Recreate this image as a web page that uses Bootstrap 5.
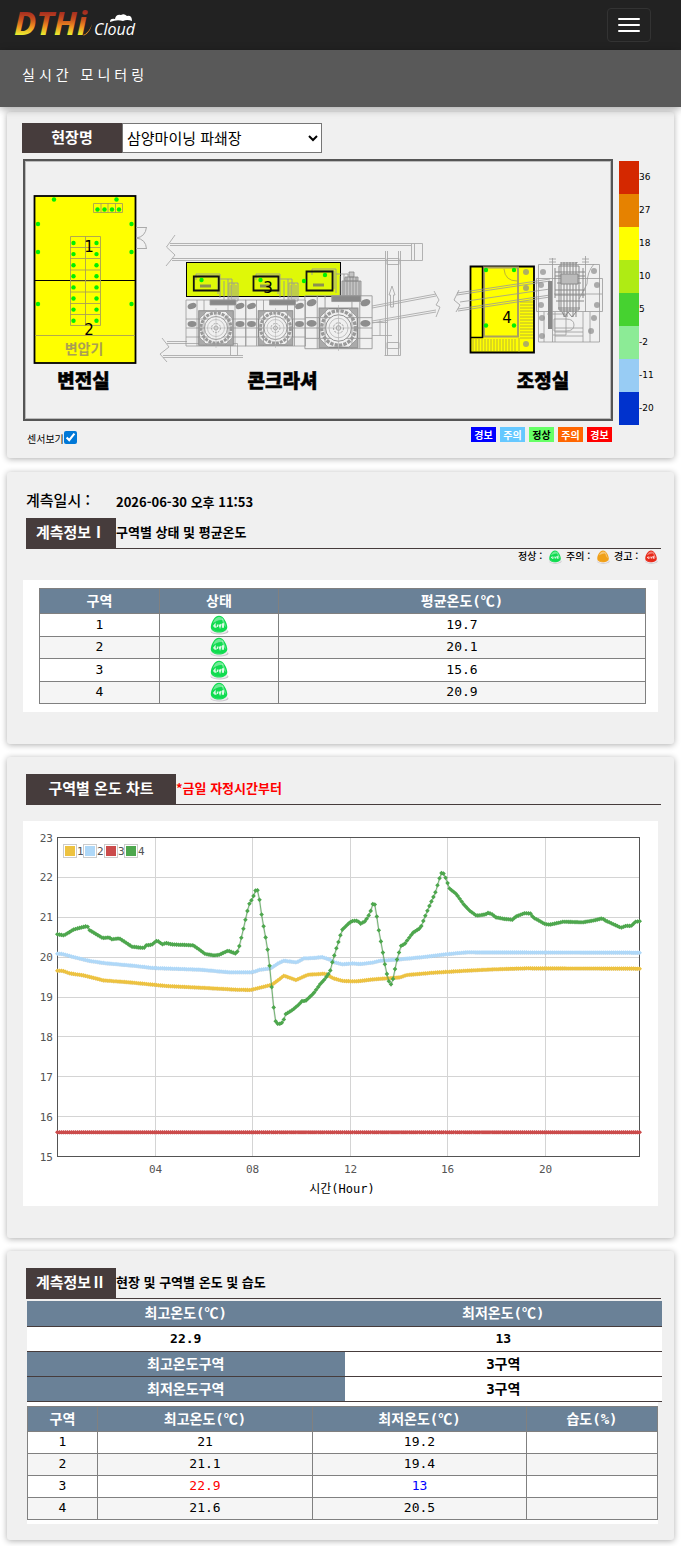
<!DOCTYPE html>
<html lang="ko">
<head>
<meta charset="utf-8">
<meta name="viewport" content="width=device-width, initial-scale=1">
<title>DTHi Cloud</title>
<link rel="stylesheet" href="https://cdn.jsdelivr.net/npm/bootstrap@5.3.0/dist/css/bootstrap.min.css">
<style>
  :root { --ink: #463c3c; --head: #6a8197; --panel: #f0f0f0; --mono: "DejaVu Sans Mono", "Noto Sans CJK KR", monospace; }
  body { background: #fff; color: #000; font: 14px/20px "Noto Sans CJK KR", "Noto Sans", sans-serif; }
  .topbar { background: #222; height: 50px; padding: 0 30px 0 14px; }
  .brand-svg { display: block; width: 126px; height: 48px; }
  .menu-btn { width: 44px; height: 34px; padding: 0; border: 1px solid #333; border-radius: 4px; background: transparent; }
  .menu-btn span { width: 22px; height: 2px; border-radius: 1px; background: #fff; }
  .page-title { position: relative; z-index: 1; height: 57px; padding: 14px 22px 0; background: #595959; box-shadow: 0 2px 8px rgba(0,0,0,.35); }
  .page-title h1 { margin: 0; font-size: 14px; line-height: 20px; letter-spacing: 4px; color: #fff; font-weight: 400; }
  .panel { background: var(--panel); border: 0; border-radius: 3px; margin: 0 7px 13px; padding: 17px 16px 32px; box-shadow: 0 1px 6px rgba(0,0,0,.32); }
  .panel-map { margin-top: 5px; margin-bottom: 14px; padding: 11px 16px 14px; }
  .panel-last { margin-bottom: 6px; padding-bottom: 16px; }
  .site-row { margin: 0 0 6px -1px; }
  .site-name { width: 100px; height: 30px; line-height: 28px; background: var(--ink); color: #fff; font-size: 15px; font-weight: 700; text-align: center; }
  .site-select { width: 200px; height: 30px; border: 1px solid #767676; border-radius: 0; background: #fff; color: #000; font-size: 15px; padding: 0 0 2px; }
  .site-map { display: block; width: 100%; height: auto; }
  .map-col { flex: 1 1 0; min-width: 0; }
  .scale { width: 39px; margin-left: 6px; padding-top: 2px; }
  .scale li { height: 33px; font: 9px/33px "DejaVu Sans", sans-serif; }
  .scale i { width: 20px; height: 33px; }
  .map-foot { margin-right: 46px; padding: 2px 0 0 4px; font-size: 10px; height: 19px; }
  .map-foot input { width: 13px; height: 13px; margin: 0; accent-color: #0078d7; }
  .map-foot label { line-height: 10px; }
  .tag { width: 25px; height: 15px; line-height: 15px; text-align: center; font-weight: 700; color: #fff; }
  .tag-low2 { background: #00f; } .tag-low1 { background: #66c8ff; } .tag-ok { background: #6f6; color: #000; } .tag-high1 { background: #f60; } .tag-high2 { background: #f00; }
  .stamp { height: 29px; padding: 1px 0 0 3px; font-weight: 700; }
  .stamp span { width: 90px; font-size: 15px; font-weight: 500; }
  .stamp time { font-size: 13px; line-height: 24px; }
  .title-bar { height: 31px; margin: 0 -3px 0 3px; border-bottom: 1px solid var(--ink); }
  .title-bar h2 { width: 90px; height: 31px; margin: 0; line-height: 28px; background: var(--ink); color: #fff; font-size: 15px; font-weight: 700; text-align: center; white-space: nowrap; }
  .title-bar h2.wide { width: 150px; }
  .title-bar p { margin: 0; font-size: 13px; line-height: 28px; font-weight: 700; }
  .states { height: 31px; font-size: 10px; line-height: 14px; gap: 4px; font-weight: 500; }
  .states svg { width: 14px; height: 14px; margin-left: 3px; }
  .sheet { background: #fff; }
  .sheet-pad { padding: 8px 12px 8px 16px; }
  .sheet-low { margin: 2px 0 0 4px; padding-bottom: 4px; }
  .grid { width: 100%; table-layout: fixed; border-collapse: collapse; font: 13px/18px var(--mono); text-align: center; }
  .grid th, .grid td { border: 1px solid #808080; padding: 0; height: 22px; }
  .grid thead th { height: 25px; background: var(--head); color: #fff; font-size: 14px; }
  .grid tbody tr:nth-child(even) { background: #f5f5f5; }
  .grid svg { display: block; width: 20px; height: 20px; margin: 0 auto; }
  .states-grid { height: 116px; }
  .extremes { width: calc(100% + 4px); table-layout: fixed; border-collapse: collapse; font: 700 13px/18px var(--mono); text-align: center; background: #fff; margin-bottom: 4px; }
  .extremes th, .extremes td { height: 25px; padding: 0; border-bottom: 1px solid var(--ink); }
  .extremes th { background: var(--head); color: #fff; font-size: 14px; }
  .extremes .zone { font-size: 14px; }
  .hot { color: #f00; } .cold { color: #00f; }
  .egg-ok { color: #10dc50; } .egg-warn { color: #f0a018; } .egg-alarm { color: #e82818; }
  .chart-svg { display: block; width: 100%; height: auto; }
</style>
</head>
<body>
<svg width="0" height="0" class="position-absolute" aria-hidden="true">
  <defs>
    <symbol id="egg" viewBox="0 0 20 20">
      <ellipse cx="10.5" cy="16.5" rx="9" ry="3" fill="#c9c5cb"/>
      <ellipse cx="10" cy="15.6" rx="8.6" ry="3" fill="#eeeaef"/>
      <path d="M10 .8C14.5.8 18 7.500 18.300 12c.1 3.500-4 5.500-8.300 5.500S1.600 15.500 1.800 12C2 7.500 5.500.8 10 .8z" fill="currentColor"/>
      <path d="M4 8C5.500 3.500 8 2 10.500 2c2 0 3.500 1.500 4.500 3.500C11 4 7 6 4 8z" fill="#fff" opacity=".4"/>
      <path d="M13 3c2 2 3.500 6 4 9-2-1-4-5-4-9zM3 14c4 3.500 10 3.500 14 .5-3 3-11 3.500-14-.5z" fill="#fff" opacity=".35"/>
    </symbol>
    <symbol id="mark-live" viewBox="0 0 20 20"><path d="M4.500 11.500l1.500-2v2.500h1.500M8.500 12V9.500M10 9.500l1 2.500 1-3M15 9h-1.500v3H15M13.500 10.500H15" fill="none" stroke="#fff" stroke-width="1.300" opacity=".85"/></symbol>
  </defs>
</svg>

<header>
  <nav class="navbar topbar flex-nowrap justify-content-between" aria-label="주 메뉴">
    <a href="#" aria-label="DTHi Cloud">
      <svg class="brand-svg" viewBox="0 0 126 48">
        <defs><linearGradient id="fire" gradientUnits="userSpaceOnUse" x1="0" y1="10" x2="0" y2="34"><stop offset="0" stop-color="#a02820"/><stop offset=".35" stop-color="#c8501e"/><stop offset=".65" stop-color="#f09020"/><stop offset="1" stop-color="#e8f030"/></linearGradient></defs>
        <text x="0" y="34" font-family="Open Sans" font-style="italic" font-weight="700" font-size="33" fill="url(#fire)">DTHi</text>
        <path d="M69 34q6-2 9-11-2 9-8 11.500z" fill="#f09020"/>
        <text x="80" y="34" font-family="Open Sans" font-style="italic" font-size="16" fill="#fff">Cloud</text>
        <path d="M96 21q0-4 5-3 1-5 6-4 3-2 6 1 5-1 5 5-5-2-9 0-6-2-13 1z" fill="#fff"/>
      </svg>
    </a>
    <button type="button" class="menu-btn d-flex flex-column align-items-center justify-content-center gap-1" aria-label="메뉴 열기"><span></span><span></span><span></span></button>
  </nav>
  <div class="page-title"><h1>실시간 모니터링</h1></div>
</header>

<main>
<section class="card panel panel-map">
  <div class="site-row d-flex">
    <label class="site-name" for="site">현장명</label>
    <select class="site-select" id="site"><option>삼양마이닝 파쇄장</option></select>
  </div>
  <div class="d-flex align-items-start">
    <div class="map-col">
      <svg class="site-map" viewBox="23 159 590 262" role="img" aria-label="현장 평면도">
        <defs>
          <g id="crusher" fill="none" stroke="#999" stroke-width=".8">
            <path d="M-30-28h60v46h-60zM-30-9h60M-30 9h60M-30 0h60M-19-28v46M19-28v46M-12-28v46M12-28v46"/>
            <rect x="-17" y="-17" width="34" height="34" stroke="#888" stroke-width="1.500"/>
            <path d="M-17-9v-8h8zM17-9v-8H9zM-17 9v8h8zM17 9v8H9z" fill="#aaa"/>
            <circle r="15" stroke="#999" stroke-width="3" stroke-dasharray="3 1"/>
            <circle r="11.500" fill="#f0f0f0" stroke="#888"/><circle r="8.500" stroke="#bbb"/><circle r="4.500" stroke-dasharray="2 1"/><circle r="2"/>
            <path d="M-20 0h40M0-20V20" stroke="#aaa" stroke-width=".5"/>
            <g fill="#8d8d8d" stroke="none"><ellipse cx="-24" cy="-22" rx="4.500" ry="3" transform="rotate(-18 -24 -22)"/><ellipse cx="24" cy="-22" rx="4.500" ry="3" transform="rotate(-18 24 -22)"/><ellipse cx="-24" cy="-4" rx="4.500" ry="3"/><ellipse cx="24" cy="-4" rx="4.500" ry="3"/></g>
            <path d="M-6-28h26v5H-6z" fill="#888"/>
          </g>
          <g id="motor" fill="none" stroke="#999" stroke-width=".9">
            <path d="M0 7V1h24v24M2 3h20v18M24 6h12v22M28 8v22M32 6v24M33 10h9v18h-9zM35 12v14M38 10v18M40 12v14"/>
          </g>
        </defs>
        <rect x="24" y="160" width="588" height="260" fill="#f0f0f0" stroke="#555" stroke-width="2"/>
        <rect x="25.500" y="161.500" width="585" height="257" fill="none" stroke="#bbb"/>

        <!-- 변전실 -->
        <rect x="34.500" y="196" width="101" height="167" fill="#ff0" stroke="#000" stroke-width="1.800"/>
        <path d="M34 280.500h102" stroke="#000"/>
        <g fill="none" stroke="#aaa054" stroke-width=".9">
          <path d="M35 335.500h100M93.500 203.500h29v9h-29zM101 203v10M108 203v10M115.500 203v10"/>
          <path d="M70.500 236.500h30v89h-30zM85.500 236v90M70 247.500h30M70 258.500h30M70 270h30M70 281h30M70 292h30M70 303.500h30M70 314.500h30"/>
        </g>
        <path d="M136 227.500h10.500M136 248.500h10.500M146.500 227q-1 10-10.500 11 10 1 10.500 11" fill="none" stroke="#aaa"/>
        <text x="84" y="354" text-anchor="middle" font-size="14" font-weight="700" fill="#aaa052">변압기</text>

        <!-- 컨베이어 -->
        <g fill="none" stroke="#aaa" stroke-width=".9">
          <path d="M170 243.500h252.500v17H172M170 245.500h241M172 258.500h213M411.500 243.500v17M414.500 243.500v17M175 235l-8.500 12 8.500 8-9 11"/>
          <path d="M385.500 251v104.500M387.500 251v104M398.500 251v104M400.500 251v104.500h-16M387 258.500h12v6h-12zM387 342.500h12v6h-12z"/>
          <path d="M390.500 307v-12h-1.500l3-9 3 9h-1.500v12z"/>
          <path d="M167 341.500h20M167 343.500h67M163 355.500h80M163 357.500h80M162 338l7 9-9 7 7 8M230.500 343.500h7v12h-7z"/>
          <path d="M372 306l64-12M372 308l64-12M372 321l64-11M372 323l64-11M434 291l5 9-3 5 4 2-4 10"/>
          <path d="M372 322.500h15M372 335.500h20M380 320v16"/>
        </g>

        <!-- 콘크라셔 -->
        <rect x="186.500" y="262.500" width="154" height="34" fill="#dff808" stroke="#000"/>
        <use href="#motor" x="196" y="273"/><use href="#motor" x="256" y="273"/><use href="#motor" x="312" y="268"/>
        <path d="M342 281h19v15h-19zM345 277h13v4h-13zM344 281v15M347 277v19M350 277v19M353 277v19M356 277v19M359 281v15M349 272h5v5h-5z" fill="#c4c4c4" stroke="#888" stroke-width=".8"/>
        <g fill="none" stroke="#111" stroke-width="1.800"><path d="M193.800 276.500h25v14h-25zM253.500 276.500h25v14h-25zM306.500 271.500h26v19h-26z"/></g>
        <path d="M200 286h11M260 286h11M313 285h11" stroke="#8c9150" stroke-width="3"/>
        <use href="#crusher" x="216" y="328"/><use href="#crusher" x="275.500" y="328"/>
        <use href="#crusher" transform="translate(338.500 328) scale(1.120 1.150)"/>

        <!-- 조정실 -->
        <path d="M470.500 266.500H534v86h-63.500z" fill="#ff0" stroke="#000" stroke-width="1.800"/>
        <g fill="none" stroke="#b4ac3c" stroke-width=".9">
          <path d="M484 267.500h34v69h-34z" stroke="#aaa060" stroke-width="2"/>
          <path d="M520 302h13M520 305h13M520 308h13M520 311h13M520 314h13M520 317h13M520 320h13M520 323h13M520 326h13M520 329h13M520 332h13M520 335h13M520 338h13"/>
          <path d="M473 339v12M476 339v12M479 339v12M482 339v12M485 339v12M488 339v12M491 339v12M494 339v12M497 339v12M500 339v12M503 339v12M506 339v12M509 339v12M512 339v12M515 339v12M519 338v14"/>
          <path d="M504 269q1 12 13 12"/>
        </g>
        <path d="M482.500 267v70.500H471" fill="none" stroke="#000" stroke-width="1.500"/>
        <g fill="none" stroke="#999" stroke-width=".8">
          <path d="M459 290l-5 10 6 5-4 7M457 293l93-14M457 295l93-14M460 302l90-13M458 309l92-14M458 311l92-14"/>
          <path d="M538.500 264.500h61v77.500h-61zM536.500 278.500h66v33h-66zM552.500 258v84M585.500 256v56M549 259h7M549 262h7M582 259h7M582 262h7M554 294h48M544 312v30M555 312v30M583 312v30M590 312v30M555 328h28M555 332h28M555 336h28M547 314h19v21h-13M566 319q8 0 8 6t-8 6h-12v-12zM594 264q-7 8-7 20l-8 15"/>
        </g>
        <path d="M549 281v48M551 281v48" stroke="#888" stroke-width="2"/>
        <g fill="none" stroke="#888" stroke-width="1">
          <path d="M561 263h16v-1M559 266h20v44h-20zM561 262v50M564 262v55M567 262v55M570 262v50M573 262v55M576 262v55M555 272h30M555 276h30M557 283h24M555 290h30M555 295h30M556 301h28M558 308h22M555 268v30M583 268v30M562 312l3 5 3-5 4 5 4-5"/>
          <path d="M561 274h17v10h-17z" fill="#bbb"/>
        </g>
        <g fill="#8c8c8c" fill-opacity=".7"><circle cx="543" cy="272" r="3"/><circle cx="541" cy="285" r="3"/><circle cx="541" cy="305" r="3"/><circle cx="542" cy="318" r="3"/><circle cx="542" cy="336" r="3"/><circle cx="594" cy="271" r="3"/><circle cx="597" cy="285" r="3"/><circle cx="597" cy="305" r="3"/><circle cx="594" cy="318" r="3"/><circle cx="591" cy="331" r="3"/><circle cx="526" cy="272" r="3"/><circle cx="526" cy="288" r="3"/><circle cx="526" cy="344" r="3"/></g>

        <g id="sensors" fill="#00f000"></g>
        <g font-family="DejaVu Sans" font-size="15" text-anchor="middle"><text x="89" y="252">1</text><text x="89" y="335">2</text><text x="268" y="293">3</text><text x="507" y="323">4</text></g>
        <g font-size="19" font-weight="900" text-anchor="middle" stroke="#000" stroke-width=".5"><text x="83.500" y="388">변전실</text><text x="282.500" y="388">콘크라셔</text><text x="543" y="388">조정실</text></g>
      </svg>
    </div>
    <ul class="scale list-unstyled mb-0" id="scale"></ul>
  </div>
  <div class="map-foot d-flex justify-content-between">
    <div class="d-flex align-items-end"><label for="sensorView">센서보기</label><input type="checkbox" id="sensorView" checked></div>
    <div class="d-flex gap-1">
      <span class="tag tag-low2">경보</span><span class="tag tag-low1">주의</span><span class="tag tag-ok">정상</span><span class="tag tag-high1">주의</span><span class="tag tag-high2">경보</span>
    </div>
  </div>
</section>

<section class="card panel">
  <div class="stamp d-flex"><span>계측일시 :</span><time>2026-06-30 오후 11:53</time></div>
  <div class="title-bar d-flex"><h2>계측정보Ⅰ</h2><p>구역별 상태 및 평균온도</p></div>
  <div class="states d-flex justify-content-end align-items-start">
    <span>정상 : <svg class="egg-ok"><use href="#egg"/><use href="#mark-live"/></svg></span>
    <span>주의 : <svg class="egg-warn"><use href="#egg"/></svg></span>
    <span>경고 : <svg class="egg-alarm"><use href="#egg"/><use href="#mark-live"/></svg></span>
  </div>
  <div class="sheet sheet-pad">
    <table class="grid states-grid">
      <colgroup><col width="120"><col width="119"><col></colgroup>
      <thead><tr><th>구역</th><th>상태</th><th>평균온도(℃)</th></tr></thead>
      <tbody id="stateRows"></tbody>
    </table>
  </div>
</section>

<section class="card panel">
  <div class="title-bar d-flex"><h2 class="wide">구역별 온도 차트</h2><p class="hot">*금일 자정시간부터</p></div>
  <div class="sheet mt-3">
    <svg class="chart-svg" id="chart" viewBox="23 821 635 385" role="img" aria-label="구역별 온도 차트"></svg>
  </div>
</section>

<section class="card panel panel-last">
  <div class="title-bar d-flex"><h2>계측정보Ⅱ</h2><p>현장 및 구역별 온도 및 습도</p></div>
  <div class="sheet sheet-low">
    <table class="extremes">
      <tbody>
        <tr><th>최고온도(℃)</th><th>최저온도(℃)</th></tr>
        <tr><td>22.9</td><td>13</td></tr>
        <tr><th scope="row">최고온도구역</th><td class="zone">3구역</td></tr>
        <tr><th scope="row">최저온도구역</th><td class="zone">3구역</td></tr>
      </tbody>
    </table>
    <table class="grid">
      <colgroup><col width="70"><col width="215"><col width="214"><col></colgroup>
      <thead><tr><th>구역</th><th>최고온도(℃)</th><th>최저온도(℃)</th><th>습도(%)</th></tr></thead>
      <tbody>
        <tr><td>1</td><td>21</td><td>19.2</td><td></td></tr>
        <tr><td>2</td><td>21.1</td><td>19.4</td><td></td></tr>
        <tr><td>3</td><td class="hot">22.9</td><td class="cold">13</td><td></td></tr>
        <tr><td>4</td><td>21.6</td><td>20.5</td><td></td></tr>
      </tbody>
    </table>
  </div>
</section>
</main>

<script src="https://cdn.jsdelivr.net/npm/bootstrap@5.3.0/dist/js/bootstrap.bundle.min.js"></script>
<script>
  // 색상 눈금
  document.getElementById('scale').innerHTML = [['#d42800', 36], ['#e68200', 27], ['#ffff00', 18], ['#afeb14', 10], ['#46d230', 5], ['#8ceb96', -2], ['#98ccf4', -11], ['#0032cd', -20]]
    .map(([c, t]) => `<li class="d-flex"><i style="background:${c}"></i>${t}</li>`).join('');

  // 구역별 상태
  document.getElementById('stateRows').innerHTML = ['19.7', '20.1', '15.6', '20.9']
    .map((t, i) => `<tr><td>${i + 1}</td><td><svg class="egg-ok" role="img" aria-label="정상"><use href="#egg"/><use href="#mark-live"/></svg></td><td>${t}</td></tr>`).join('');

  // 센서 위치
  const dots = [[54,199.5],[116.5,199.5],[38,224],[131.5,224],[38,252],[131.5,252],[38,304],[131.5,304],[97.5,209.5],[104.5,209.5],[112,209.5],[119,209.5],
    [201.5,280],[260.5,280],[304,281],[325,275],[486,270],[514,270],[486,325.5],[514,325.5]];
  for (let i = 0; i < 8; i++) dots.push([73.5, 243 + i * 11.1], [96.5, 243 + i * 11.1]);
  const sensors = document.getElementById('sensors');
  sensors.innerHTML = dots.map(([x, y]) => `<circle cx="${x}" cy="${y}" r="2.2"/>`).join('');
  document.getElementById('sensorView').addEventListener('change', e => { sensors.style.display = e.target.checked ? '' : 'none'; });

  // 온도 차트: 꺾임점 사이를 5분 간격으로 보간
  const L = 57.5, R = 639.5, T = 837.5, B = 1156.5;
  const series = [
    ['#edc240', '172,452 186,452 210,460 250,466 310,481 400,488 500,498 620,504 710,509 752,510 780,503 816,494 852,467 888,480 924,464 976,461 1000,475 1030,483 1070,484 1120,478 1200,472 1220,465 1300,458 1400,452 1480,448 1580,445 1919,446'],
    ['#afd8f8', '172,401 188,402 220,411 270,423 320,430 400,437 460,444 600,449 690,457 756,457 780,449 812,445 836,429 852,422 890,427 912,415 940,414 966,411 990,419 1004,427 1028,433 1056,430 1080,432 1116,428 1140,422 1200,418 1280,410 1344,402 1400,397 1919,398'],
    ['#cb4b4b', '172,937 1919,937'],
    ['#4da74d', '172,343 192,346 222,328 262,318 268,330 308,354 328,352 334,358 358,355 396,380 432,384 438,376 456,374 468,363 474,363 486,373 498,369 514,373 580,376 616,402 640,406 656,405 684,392 708,401 715,390 721,366 727,340 733,313 739,287 745,260 751,244 757,238 763,220 769,206 775,214 781,256 787,301 794,334 800,373 806,406 812,470 818,533 825,600 831,611 843,611 850,603 856,583 880,568 898,552 906,543 916,543 940,521 960,493 972,480 990,455 996,430 1002,410 1008,388 1014,370 1020,350 1026,330 1044,312 1056,303 1072,302 1082,311 1096,303 1110,280 1116,260 1121,243 1127,262 1133,310 1139,346 1146,382 1153,424 1159,455 1165,478 1171,496 1177,486 1183,458 1189,426 1196,402 1202,378 1214,372 1226,355 1238,339 1262,323 1276,287 1288,258 1306,218 1318,176 1325,158 1331,161 1337,174 1343,190 1349,206 1369,222 1391,253 1409,272 1429,287 1457,283 1465,278 1477,283 1487,292 1515,297 1537,299 1547,290 1575,279 1593,281 1599,292 1635,312 1649,314 1691,305 1747,307 1783,301 1807,295 1817,302 1863,323 1879,317 1893,318 1907,305 1919,304']
  ];
  let s = '';
  for (let v = 15; v <= 23; v++) {
    const y = B - (v - 15) * (B - T) / 8, p = Math.floor(y) + .5;
    if (v > 15 && v < 23) s += `<path d="M${L} ${p}H${R}" stroke="#d4d4d4"/>`;
    s += `<text x="53" y="${y + 4}" text-anchor="end">${v}</text>`;
  }
  [['04', 155.5], ['08', 252.5], ['12', 350.5], ['16', 447.5], ['20', 545.5]].forEach(([t, x]) => {
    s += `<path d="M${x} ${T}V${B}" stroke="#d4d4d4"/><text x="${x}" y="1173" text-anchor="middle">${t}</text>`;
  });
  s += `<rect x="${L}" y="${T}" width="${R - L}" height="${B - T}" fill="none" stroke="#545454"/>`;
  series.forEach(([color, raw], n) => {
    const k = raw.split(' ').map(p => p.split(',').map(Number)).map(([x, y]) => [x / 3, y / 3 + 820]);
    let j = 0, line = '', marks = '';
    for (let i = 0; i <= 288; i++) {
      const x = k[0][0] + i * (k[k.length - 1][0] - k[0][0]) / 288;
      while (j < k.length - 2 && x > k[j + 1][0]) j++;
      const y = k[j][1] + (k[j + 1][1] - k[j][1]) * (x - k[j][0]) / (k[j + 1][0] - k[j][0]);
      line += (i ? 'L' : 'M') + x.toFixed(1) + ' ' + y.toFixed(1);
      marks += `M${(x - 2.3).toFixed(1)} ${y.toFixed(1)}l2.3-2.3 2.3 2.3-2.3 2.3z`;
    }
    s += `<path d="${line}" fill="none" stroke="#000" stroke-opacity=".12" stroke-width="2" transform="translate(0 1)"/><path d="${line}" fill="none" stroke="${color}" stroke-width="1" stroke-opacity="${n === 3 ? .75 : 1}"/><path d="${marks}" fill="${color}"/>`;
  });
  series.forEach(([color], i) => {
    const x = [63.5, 83.5, 104.5, 124.5][i];
    s += `<rect x="${x}" y="844.5" width="13" height="13" fill="#fff" stroke="#ccc"/><rect x="${x + 1.5}" y="846" width="10" height="10" fill="${color}"/><text x="${x + 13.5}" y="855">${i + 1}</text>`;
  });
  document.getElementById('chart').innerHTML = `<g font-family="'DejaVu Sans Mono', monospace" font-size="11" fill="#545454">${s}</g><text x="342" y="1193" text-anchor="middle" font-family="'DejaVu Sans Mono', 'Noto Sans CJK KR', monospace" font-size="12">시간(Hour)</text>`;
</script>
</body>
</html>
